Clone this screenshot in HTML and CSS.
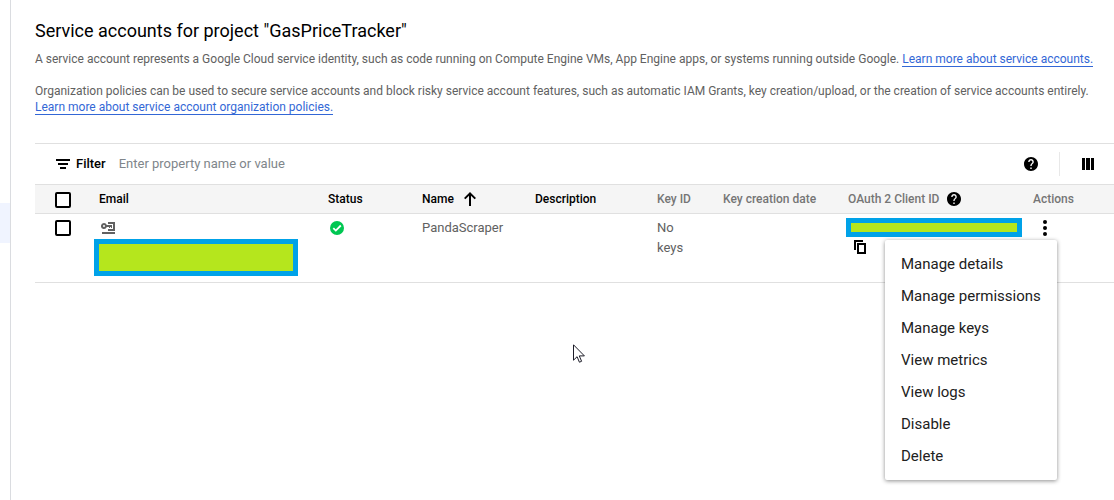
FILE: index.html
```html
<!DOCTYPE html>
<html lang="en">
<head>
<meta charset="utf-8">
<meta name="viewport" content="width=device-width, initial-scale=1">
<title>Service accounts</title>
<link rel="stylesheet" href="styles.css">
</head>
<body>
<div class="app">
  <nav class="side-nav" aria-label="Sections"><span class="side-nav-active"></span></nav>
  <main class="content">
    <header class="intro">
      <h1 class="title">Service accounts for project "GasPriceTracker"</h1>
      <p class="text">A service account represents a Google Cloud service identity, such as code running on Compute Engine VMs, App Engine apps, or systems running outside Google. <a class="link" href="#accounts">Learn more about service accounts.</a></p>
      <p class="text">Organization policies can be used to secure service accounts and block risky service account features, such as automatic IAM Grants, key creation/upload, or the creation of service accounts entirely. <a class="link" href="#policies">Learn more about service account organization policies.</a></p>
    </header>

    <div class="toolbar">
      <svg class="icon filter-icon" viewBox="0 0 14 10" width="14" height="10" aria-hidden="true"><path d="M0 0h14v2H0zM2 4h10v2H2zM4 8h6v2H4z"/></svg>
      <label class="filter-label" for="filter">Filter</label>
      <input class="filter-input" id="filter" type="text" placeholder="Enter property name or value">
      <button class="icon-button" type="button" aria-label="Help">
        <svg class="icon" viewBox="2 2 20 20" width="14" height="14" aria-hidden="true"><path d="M12 2C6.480 2 2 6.480 2 12s4.480 10 10 10 10-4.480 10-10S17.520 2 12 2zm1 17h-2v-2h2v2zm2.070-7.750-.9.920C13.450 12.900 13 13.500 13 15h-2v-.5c0-1.100.450-2.100 1.170-2.830l1.240-1.260c.370-.360.590-.860.590-1.410 0-1.100-.9-2-2-2s-2 .9-2 2H8c0-2.210 1.790-4 4-4s4 1.790 4 4c0 .880-.360 1.680-.930 2.250z"/></svg>
      </button>
      <span class="divider"></span>
      <button class="icon-button" type="button" aria-label="Column display options">
        <svg class="icon" viewBox="0 0 12 12" width="12" height="12" aria-hidden="true"><path d="M0 0h3v12H0zM4 0h4v12H4zM9 0h3v12H9z"/></svg>
      </button>
    </div>

    <table class="accounts">
      <colgroup>
        <col class="col-check"><col class="col-email"><col class="col-status"><col class="col-name"><col class="col-desc"><col class="col-key"><col class="col-date"><col class="col-oauth"><col class="col-actions">
      </colgroup>
      <thead>
        <tr>
          <th class="check-cell"><input class="check" type="checkbox" aria-label="Select all"></th>
          <th>Email</th>
          <th>Status</th>
          <th><span class="head-group">Name <svg class="icon" viewBox="0 0 12 14" width="12" height="14" aria-hidden="true"><path d="M5 14V3.700L1.400 7.300 0 6l6-6 6 6-1.400 1.300L7 3.700V14z"/></svg></span></th>
          <th>Description</th>
          <th class="muted">Key ID</th>
          <th class="muted">Key creation date</th>
          <th class="muted"><span class="head-group help-group">OAuth 2 Client ID <svg class="icon" viewBox="2 2 20 20" width="14" height="14" aria-hidden="true"><path d="M12 2C6.480 2 2 6.480 2 12s4.480 10 10 10 10-4.480 10-10S17.520 2 12 2zm1 17h-2v-2h2v2zm2.070-7.750-.9.920C13.450 12.900 13 13.500 13 15h-2v-.5c0-1.100.450-2.100 1.170-2.830l1.240-1.260c.370-.360.590-.860.590-1.410 0-1.100-.9-2-2-2s-2 .9-2 2H8c0-2.210 1.790-4 4-4s4 1.790 4 4c0 .880-.360 1.680-.930 2.250z"/></svg></span></th>
          <th class="muted">Actions</th>
        </tr>
      </thead>
      <tbody>
        <tr>
          <td class="check-cell"><input class="check" type="checkbox" aria-label="Select PandaScraper"></td>
          <td>
            <span class="cell-icon"><svg class="key-icon" viewBox="0 0 14 12" width="14" height="12" aria-hidden="true"><path d="M1 10h13v2H1zM7 0h7v9H7V7h5V2H7z"/><path fill-rule="evenodd" d="M3 1a3 3 0 0 1 2.800 2H11v3H10v-1H9v1H8v-1H5.800A3 3 0 1 1 3 1zm0 2a1 1 0 1 0 0 2 1 1 0 0 0 0-2z"/></svg></span>
            <span class="redacted redacted-email"></span>
          </td>
          <td><span class="cell-icon status-icon"><svg viewBox="0 0 14 14" width="14" height="14" role="img" aria-label="Enabled"><circle cx="7" cy="7" r="7" fill="#00c752"/><path d="M3.300 7.200l2.500 2.400 5-5.100" fill="none" stroke="#fff" stroke-width="1.800"/></svg></span></td>
          <td>PandaScraper</td>
          <td></td>
          <td class="key-cell">No keys</td>
          <td></td>
          <td>
            <span class="redacted redacted-id"></span>
            <button class="copy-button" type="button" aria-label="Copy client ID"><svg class="icon" viewBox="0 0 12 14" width="12" height="14" aria-hidden="true"><path d="M0 0h9v2H2v8H0z"/><path fill-rule="evenodd" d="M3 3h9v11H3zm2 2v7h5V5z"/></svg></button>
          </td>
          <td class="actions-cell">
            <div class="actions">
              <button class="more-button" type="button" aria-label="Actions" aria-haspopup="menu" aria-expanded="true"><svg class="icon" viewBox="0 0 4 16" width="4" height="16" aria-hidden="true"><circle cx="2" cy="2" r="2"/><circle cx="2" cy="8" r="2"/><circle cx="2" cy="14" r="2"/></svg></button>
              <div class="menu" role="menu">
                <button class="menu-item" type="button" role="menuitem">Manage details</button>
                <button class="menu-item" type="button" role="menuitem">Manage permissions</button>
                <button class="menu-item" type="button" role="menuitem">Manage keys</button>
                <button class="menu-item" type="button" role="menuitem">View metrics</button>
                <button class="menu-item" type="button" role="menuitem">View logs</button>
                <button class="menu-item" type="button" role="menuitem">Disable</button>
                <button class="menu-item" type="button" role="menuitem">Delete</button>
              </div>
            </div>
          </td>
        </tr>
      </tbody>
    </table>
  </main>
</div>
<svg class="pointer" viewBox="0 0 12 19" width="12" height="19" aria-hidden="true"><path d="M.5.800v15.400l3.600-3.500 2.300 5.500 2.200-.9-2.300-5.400h5.100z" fill="#fff" stroke="#1c1c28"/></svg>
</body>
</html>
```
FILE: styles.css
```css
* {
  box-sizing: border-box;
}

body {
  margin: 0;
  background: #fff;
  color: #000;
  font-family: Roboto, "Liberation Sans", sans-serif;
  font-size: 13px;
  line-height: 20px;
}

button,
input {
  font: inherit;
}

button {
  padding: 0;
  border: 0;
  background: none;
  color: inherit;
}

svg {
  display: block;
  flex: none;
}

.icon {
  fill: #000;
}

.app {
  display: flex;
  min-height: 100vh;
}

.side-nav {
  flex: none;
  width: 11px;
  padding-top: 203px;
  border-right: 1px solid #dadce0;
}

.side-nav-active {
  display: block;
  height: 40px;
  background: #f0f4ff;
}

.content {
  flex: 1;
  min-width: 0;
  padding: 19px 0 0 24px;
}

.intro {
  padding-right: 16px;
}

.title {
  margin: 0 0 8px;
  font-size: 18px;
  font-weight: 400;
  line-height: 24px;
}

.text {
  margin: 0 0 16px;
  color: #616161;
  font-size: 12px;
  line-height: 16px;
}

.link {
  border-bottom: 1px solid #3367d6;
  color: #3367d6;
  text-decoration: none;
}

.toolbar {
  display: flex;
  align-items: center;
  height: 41px;
  margin-top: 28px;
  padding: 0 14px 0 21px;
  border-top: 1px solid #e0e0e0;
}

.filter-icon {
  margin-right: 6px;
}

.filter-label {
  font-weight: 500;
}

.filter-input {
  flex: 1;
  min-width: 0;
  margin-left: 13px;
  padding: 0;
  border: 0;
  outline: 0;
}

.filter-input::placeholder {
  color: #80868b;
}

.icon-button {
  display: grid;
  place-items: center;
  width: 24px;
  height: 24px;
}

.divider {
  width: 1px;
  height: 24px;
  margin: 0 16px;
  background: #e8e8e8;
}

.accounts {
  width: 100%;
  border-collapse: separate;
  border-spacing: 0;
  table-layout: fixed;
}

.col-check { width: 56px; }
.col-email { width: 229px; }
.col-status { width: 94px; }
.col-name { width: 113px; }
.col-desc { width: 122px; }
.col-key { width: 66px; }
.col-date { width: 125px; }
.col-oauth { width: 185px; }

.accounts th {
  height: 30px;
  padding: 0 0 0 8px;
  border-top: 1px solid #e0e0e0;
  border-bottom: 1px solid #e0e0e0;
  background: #f5f5f5;
  font-size: 12px;
  font-weight: 500;
  text-align: left;
  white-space: nowrap;
}

.accounts .muted {
  color: #757575;
}

.accounts td {
  padding: 4px 8px 6px;
  border-bottom: 1px solid #e0e0e0;
  color: #616161;
  vertical-align: top;
}

.accounts .check-cell {
  padding-left: 20px;
}

.accounts .key-cell {
  padding-right: 16px;
}

.check {
  appearance: none;
  display: block;
  width: 16px;
  height: 16px;
  margin: 2px 0 0;
  border: 2px solid #000;
  border-radius: 2px;
  background: #fff;
}

.head-group {
  display: flex;
  align-items: center;
  gap: 10px;
}

.help-group {
  gap: 8px;
}

.cell-icon {
  display: flex;
  align-items: center;
  height: 20px;
  padding-left: 2px;
}

.key-icon {
  fill: #616161;
}

.redacted {
  display: block;
  border: 5px solid #00a2e8;
  background: #b5e61d;
}

.redacted-email {
  width: 204px;
  height: 37px;
  margin: 1px 0 0 -5px;
}

.redacted-id {
  width: 176px;
  height: 19px;
  margin-left: -2px;
}

.copy-button {
  display: block;
  margin: 3px 0 0 6px;
}

.accounts .actions-cell {
  padding-top: 2px;
}

.actions {
  position: relative;
  width: 24px;
}

.more-button {
  display: grid;
  place-items: center;
  width: 24px;
  height: 24px;
}

.menu {
  position: absolute;
  top: 100%;
  right: 0;
  z-index: 1;
  min-width: 172px;
  padding: 8px 0;
  border-radius: 2px;
  background: #fff;
  box-shadow: 0 1px 4px rgba(0, 0, 0, 0.45);
}

.menu-item {
  display: block;
  width: 100%;
  height: 32px;
  padding: 0 16px;
  color: #212121;
  font-size: 15px;
  text-align: left;
  white-space: nowrap;
}

.pointer {
  position: absolute;
  top: 344px;
  left: 573px;
}
```
